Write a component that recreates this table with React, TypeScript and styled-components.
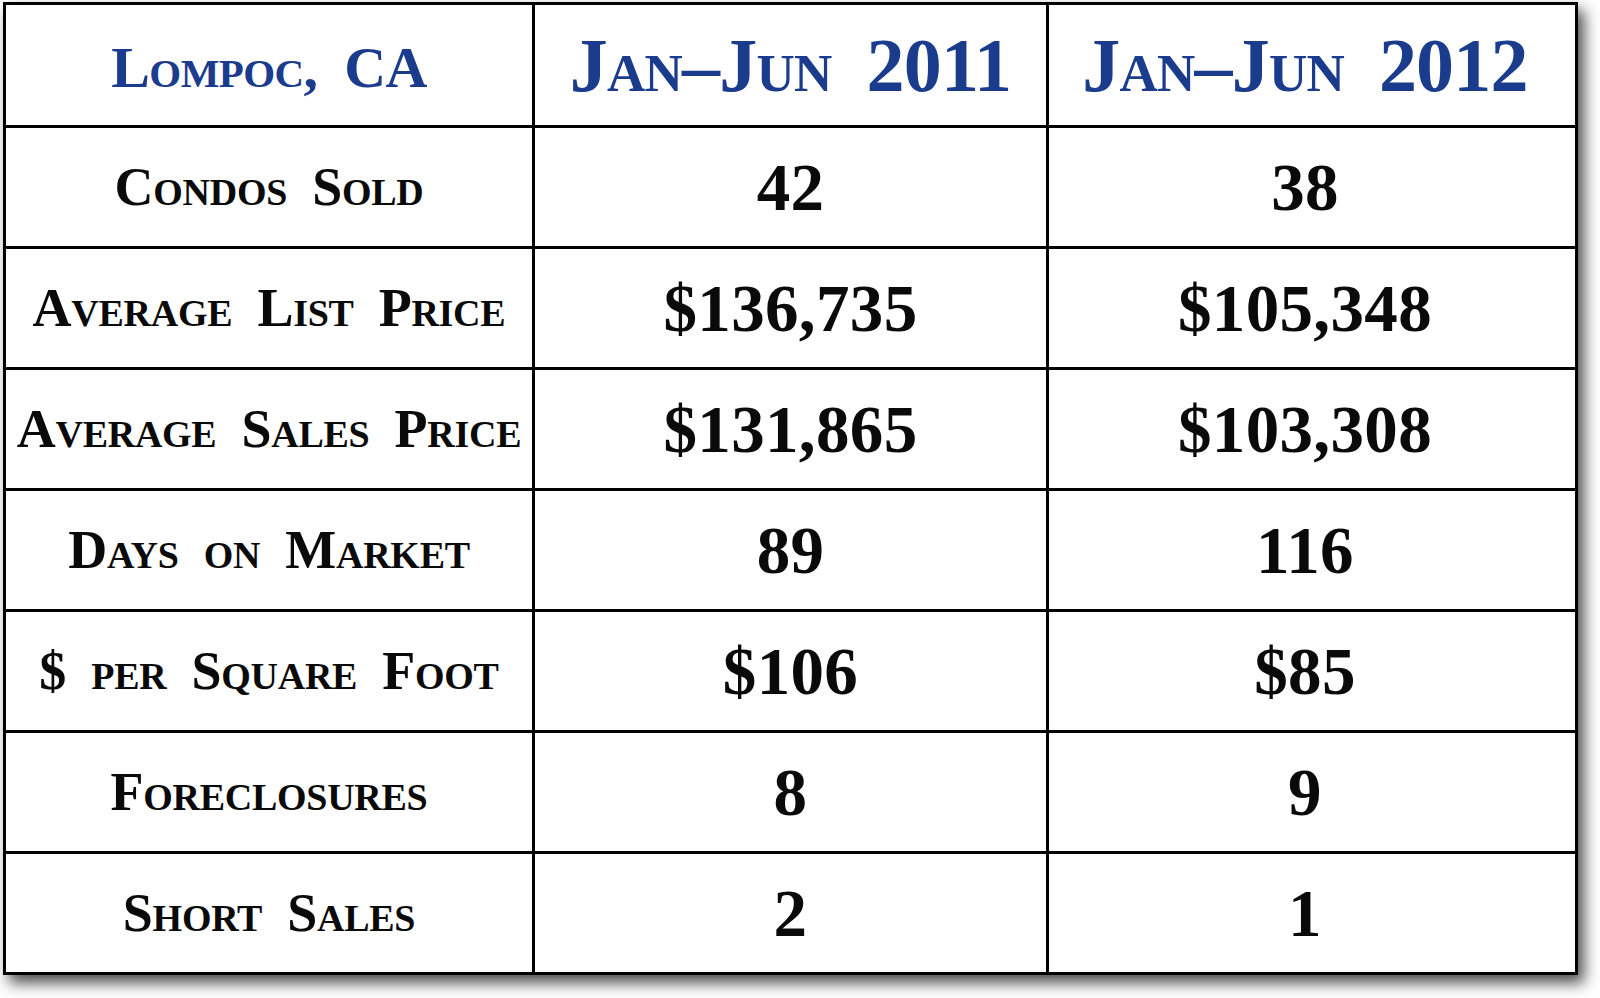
import React from 'react';
import styled, { createGlobalStyle } from 'styled-components';

const GlobalStyle = createGlobalStyle`
  html, body {
    margin: 0;
    padding: 0;
    background: #ffffff;
  }
`;

const Page = styled.div`
  width: 1600px;
  height: 998px;
  padding: 2px 0 0 3px;
  box-sizing: border-box;
  overflow: hidden;
`;

const Table = styled.div`
  display: grid;
  grid-template-columns: 526px 511px 526px;
  grid-template-rows: 120px repeat(7, 118px);
  gap: 3px;
  padding: 3px;
  width: max-content;
  background: #000000;
  box-shadow: 6px 8px 14px rgba(0, 0, 0, 0.7);
`;

const Cell = styled.div<{ $head?: boolean; $label?: boolean; $last?: boolean }>`
  background: #ffffff;
  display: flex;
  align-items: center;
  justify-content: center;
  padding-right: ${({ $last }) => ($last ? '14px' : '0')};
  font-family: 'Liberation Serif', 'Times New Roman', serif;
  font-weight: bold;
  white-space: nowrap;
  color: ${({ $head }) => ($head ? '#1b3c8c' : '#0a0a0a')};
  font-variant: ${({ $head, $label }) => ($head || $label ? 'small-caps' : 'normal')};
  word-spacing: ${({ $head, $label }) => ($head || $label ? '0.22em' : 'normal')};
  letter-spacing: ${({ $head, $label }) => ($head ? '-0.01em' : $label ? '-0.005em' : '0.005em')};
  font-size: ${({ $head, $label }) => ($head ? '76px' : $label ? '54px' : '67px')};
`;

const Corner = styled(Cell)`
  font-size: 58px;
  padding-top: 4px;
`;

const rows: [string, string, string][] = [
  ['Condos Sold', '42', '38'],
  ['Average List Price', '$136,735', '$105,348'],
  ['Average Sales Price', '$131,865', '$103,308'],
  ['Days on Market', '89', '116'],
  ['$ per Square Foot', '$106', '$85'],
  ['Foreclosures', '8', '9'],
  ['Short Sales', '2', '1'],
];

export default function App() {
  return (
    <Page>
      <GlobalStyle />
      <Table>
        <Corner $head>Lompoc, CA</Corner>
        <Cell $head>Jan–Jun 2011</Cell>
        <Cell $head $last>Jan–Jun 2012</Cell>
        {rows.map(([label, a, b]) => (
          <React.Fragment key={label}>
            <Cell $label>{label}</Cell>
            <Cell>{a}</Cell>
            <Cell $last>{b}</Cell>
          </React.Fragment>
        ))}
      </Table>
    </Page>
  );
}
